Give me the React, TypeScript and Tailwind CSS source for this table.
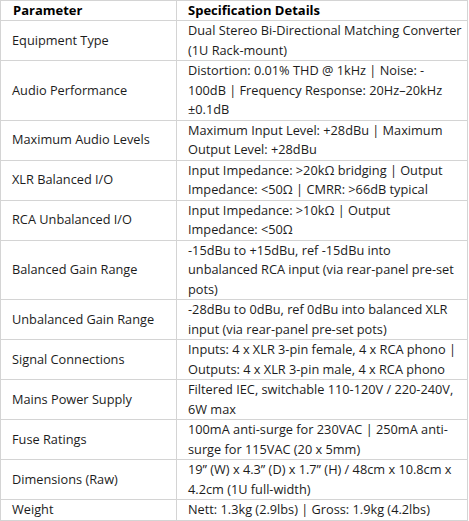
import React from 'react';

type Row = { param: string; lines: string[] };

const rows: Row[] = [
  { param: 'Equipment Type', lines: ['Dual Stereo Bi-Directional Matching Converter', '(1U Rack-mount)'] },
  {
    param: 'Audio Performance',
    lines: ['Distortion: 0.01% THD @ 1kHz | Noise: -', '100dB | Frequency Response: 20Hz\u201320kHz', '\u00b10.1dB'],
  },
  { param: 'Maximum Audio Levels', lines: ['Maximum Input Level: +28dBu | Maximum', 'Output Level: +28dBu'] },
  { param: 'XLR Balanced I/O', lines: ['Input Impedance: >20k\u03a9 bridging | Output', 'Impedance: <50\u03a9 | CMRR: >66dB typical'] },
  { param: 'RCA Unbalanced I/O', lines: ['Input Impedance: >10k\u03a9 | Output', 'Impedance: <50\u03a9'] },
  {
    param: 'Balanced Gain Range',
    lines: ['-15dBu to +15dBu, ref -15dBu into', 'unbalanced RCA input (via rear-panel pre-set', 'pots)'],
  },
  { param: 'Unbalanced Gain Range', lines: ['-28dBu to 0dBu, ref 0dBu into balanced XLR', 'input (via rear-panel pre-set pots)'] },
  {
    param: 'Signal Connections',
    lines: ['Inputs: 4 x XLR 3-pin female, 4 x RCA phono |', 'Outputs: 4 x XLR 3-pin male, 4 x RCA phono'],
  },
  { param: 'Mains Power Supply', lines: ['Filtered IEC, switchable 110-120V / 220-240V,', '6W max'] },
  { param: 'Fuse Ratings', lines: ['100mA anti-surge for 230VAC | 250mA anti-', 'surge for 115VAC (20 x 5mm)'] },
  {
    param: 'Dimensions (Raw)',
    lines: ['19\u201d (W) x 4.3\u201d (D) x 1.7\u201d (H) / 48cm x 10.8cm x', '4.2cm (1U full-width)'],
  },
  { param: 'Weight', lines: ['Nett: 1.3kg (2.9lbs) | Gross: 1.9kg (4.2lbs)'] },
];

export default function App() {
  return (
    <div className="bg-white font-['Open_Sans',sans-serif] text-[12.75px] text-[#1c1c1c]">
      <table className="w-[468px] border-collapse table-fixed">
        <colgroup>
          <col className="w-[176px]" />
          <col />
        </colgroup>
        <thead>
          <tr>
            <th className="border border-[#d4d4d4] pl-[12px] py-0 text-left align-middle font-bold text-[13px] leading-[19px] text-black">
              Parameter
            </th>
            <th className="border border-[#d4d4d4] pl-[11px] py-0 text-left align-middle font-bold text-[13px] leading-[19px] text-black">
              Specification Details
            </th>
          </tr>
        </thead>
        <tbody>
          {rows.map((r) => (
            <tr key={r.param}>
              <td className="border border-[#d4d4d4] pl-[11px] py-0 align-middle leading-[19.5px] whitespace-nowrap">
                {r.param}
              </td>
              <td className="border border-[#d4d4d4] pl-[11px] pr-1 py-0 align-middle leading-[19.5px]">
                {r.lines.map((l, i) => (
                  <div key={i} className="whitespace-nowrap">
                    {l}
                  </div>
                ))}
              </td>
            </tr>
          ))}
        </tbody>
      </table>
    </div>
  );
}
